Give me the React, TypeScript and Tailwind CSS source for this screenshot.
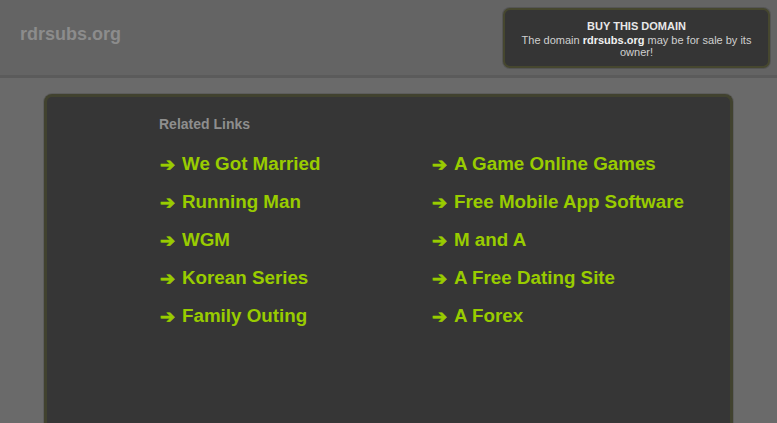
const LEFT_LINKS = ['We Got Married', 'Running Man', 'WGM', 'Korean Series', 'Family Outing']
const RIGHT_LINKS = ['A Game Online Games', 'Free Mobile App Software', 'M and A', 'A Free Dating Site', 'A Forex']

function LinkRow({ label }: { label: string }) {
  return (
    <a href="#" className="flex items-center h-[38px] text-[18.8px] font-bold text-[#99cc00] no-underline">
      <span className="w-[23px] pl-px text-[18px] font-bold font-['DejaVu_Sans',sans-serif] [-webkit-text-stroke:0.8px_#99cc00]">➔</span>
      <span>{label}</span>
    </a>
  )
}

export default function App() {
  return (
    <div className="min-h-[423px] bg-[#6a6a6a] font-['Liberation_Sans',Arial,sans-serif] overflow-hidden">
      {/* header */}
      <div className="flex justify-between items-start h-[78px] bg-[#646464] border-b-[3px] border-[#5b5b5b] pl-[20px] pr-[7px]">
        <div className="pt-[23px] text-[18px] font-bold text-[#8c8c8c] leading-[22px]">rdrsubs.org</div>
        <div className="mt-[8px] w-[267px] h-[60px] rounded-[7px] border-2 border-[#46472f] bg-[#353535] shadow-[0_0_0_1px_#555] text-center px-[10px] pt-[9px]">
          <div className="text-[11px] font-bold text-[#e8e8e8] leading-[15px]">BUY THIS DOMAIN</div>
          <div className="text-[11px] text-[#d0d0d0] leading-[12px]">
            The domain <b className="text-[#f0f0f0]">rdrsubs.org</b> may be for sale by its owner!
          </div>
        </div>
      </div>

      {/* main panel */}
      <div className="px-[44px] pt-[16px]">
        <div className="h-[340px] rounded-t-[8px] border-[3px] border-b-0 border-[#41422f] bg-[#363636] shadow-[0_0_0_1px_#5d5d5d] pl-[112px] pt-[17px]">
          <div className="text-[14px] font-bold text-[#8e8e8e] leading-[20px]">Related Links</div>
          <div className="grid grid-cols-[272px_272px] mt-[11px]">
            <div className="flex flex-col">
              {LEFT_LINKS.map((l) => <LinkRow key={l} label={l} />)}
            </div>
            <div className="flex flex-col">
              {RIGHT_LINKS.map((l) => <LinkRow key={l} label={l} />)}
            </div>
          </div>
        </div>
      </div>
    </div>
  )
}
